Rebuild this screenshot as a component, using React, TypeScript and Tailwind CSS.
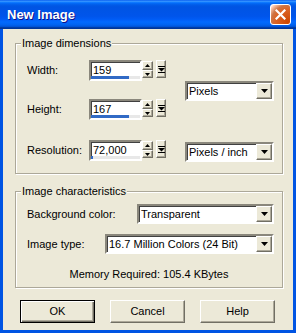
import React from "react";

const raised =
  "bg-[#ECE9D8] border border-t-white border-l-white border-r-[#716F64] border-b-[#716F64] shadow-[inset_-1px_-1px_0_#ACA899]";
const sunken =
  "bg-white border-2 border-t-[#8A877C] border-l-[#8A877C] border-r-white border-b-white shadow-[inset_1px_1px_0_#404040]";

function Arrow({ up }: { up?: boolean }) {
  return (
    <svg width="5" height="3" viewBox="0 0 5 3">
      {up ? <polygon points="2.5,0 5,3 0,3" fill="#000" /> : <polygon points="0,0 5,0 2.5,3" fill="#000" />}
    </svg>
  );
}

function SpinField({ value, bar }: { value: string; bar: number }) {
  return (
    <div className="flex items-start">
      <div className={`w-[53px] h-[21px] flex flex-col ${sunken}`}>
        <div className="h-[14px] leading-[15px] pl-[2px] pt-[1px]">{value}</div>
        <div className="mt-auto h-[3px] bg-[#E8E8E8] flex">
          <div className="h-full bg-[#316AC5]" style={{ width: bar }} />
        </div>
      </div>
      <div className="flex flex-col mt-[1px]">
        <div className={`w-[11px] h-[9px] flex items-center justify-center ${raised}`}>
          <Arrow up />
        </div>
        <div className={`w-[11px] h-[8px] flex items-center justify-center ${raised}`}>
          <Arrow />
        </div>
      </div>
      <div className={`ml-[3px] w-[10px] h-[18px] flex items-center justify-center ${raised}`}>
        <svg width="7" height="7" viewBox="0 0 7 7">
          <rect x="0" y="0" width="7" height="1" fill="#000" />
          <polygon points="0,2 7,2 3.5,5.5" fill="#000" />
          <rect x="0" y="6" width="7" height="1" fill="#000" />
        </svg>
      </div>
    </div>
  );
}

function Select({ value, width }: { value: string; width: string }) {
  return (
    <div className={`${width} h-[20px] flex items-center ${sunken}`}>
      <span className="flex-1 pl-[2px] leading-[14px]">{value}</span>
      <div className={`w-[16px] h-[16px] flex items-center justify-center ${raised}`}>
        <svg width="7" height="4" viewBox="0 0 7 4">
          <polygon points="0,0 7,0 3.5,4" fill="#000" />
        </svg>
      </div>
    </div>
  );
}

function Row({ label, value, bar }: { label: string; value: string; bar: number }) {
  return (
    <div className="flex items-center">
      <span className="w-[62px]">{label}</span>
      <SpinField value={value} bar={bar} />
    </div>
  );
}

function Button({ label, isDefault }: { label: string; isDefault?: boolean }) {
  return (
    <button
      className={`w-[75px] h-[23px] flex items-center justify-center ${
        isDefault
          ? "bg-[#ECE9D8] border border-black shadow-[inset_1px_1px_0_#fff,inset_-1px_-1px_0_#716F64,inset_-2px_-2px_0_#ACA899]"
          : raised
      }`}
    >
      {label}
    </button>
  );
}

export default function App() {
  return (
    <div className="w-[296px] h-[333px] flex flex-col bg-[#0054E3] font-['Liberation_Sans',Arial,sans-serif] text-[11px] text-black">
      <div className="h-[29px] flex items-center justify-between pl-[7px] pr-[5px] bg-[linear-gradient(180deg,#0058EE_0%,#3A93FF_4%,#288EFF_6%,#127DFF_8%,#036FFC_10%,#0262EE_14%,#0057E5_20%,#0054E3_24%,#0055EB_56%,#005BF5_66%,#026AFE_76%,#0062EF_86%,#0052D6_92%,#0040AB_94%,#003092_100%)]">
        <span className="text-white font-bold text-[13px] [text-shadow:1px_1px_#0F1089]">New Image</span>
        <div className="w-[21px] h-[21px] rounded-[3px] border border-white flex items-center justify-center bg-[radial-gradient(circle_at_90%_90%,#cc4600_0%,#dc6527_55%,#cd7546_70%,#ffccb2_90%,#fff_100%)]">
          <svg width="11" height="11" viewBox="0 0 11 11">
            <path d="M1.5 1.5 L9.5 9.5 M9.5 1.5 L1.5 9.5" stroke="#fff" strokeWidth="2.2" strokeLinecap="square" />
          </svg>
        </div>
      </div>

      <div className="flex-1 mx-[3px] mb-[3px] bg-[#ECE9D8] flex flex-col">
        <fieldset className="mt-[7px] ml-[12px] mr-[10px] border border-[#ACA899] shadow-[inset_1px_1px_0_#fff,1px_1px_0_#fff]">
          <legend className="ml-[5px] px-[1px] leading-[14px] bg-[#ECE9D8]">Image dimensions</legend>
          <div className="pl-[11px] pt-[10px] pb-[11px] flex flex-col">
            <div className="flex items-center">
              <div className="flex flex-col gap-[18px]">
                <Row label="Width:" value="159" bar={38} />
                <Row label="Height:" value="167" bar={38} />
              </div>
              <div className="ml-[19px] mt-[2px]">
                <Select value="Pixels" width="w-[89px]" />
              </div>
            </div>
            <div className="flex items-center mt-[19px]">
              <Row label="Resolution:" value="72,000" bar={2} />
              <div className="ml-[19px] mt-[3px]">
                <Select value="Pixels / inch" width="w-[89px]" />
              </div>
            </div>
          </div>
        </fieldset>

        <fieldset className="mt-[10px] ml-[12px] mr-[10px] border border-[#ACA899] shadow-[inset_1px_1px_0_#fff,1px_1px_0_#fff]">
          <legend className="ml-[5px] px-[1px] leading-[14px] bg-[#ECE9D8]">Image characteristics</legend>
          <div className="pl-[11px] pt-[6px] pb-[6px] flex flex-col">
            <div className="flex items-center">
              <span className="w-[110px]">Background color:</span>
              <Select value="Transparent" width="w-[137px]" />
            </div>
            <div className="flex items-center mt-[10px]">
              <span className="w-[78px]">Image type:</span>
              <Select value="16.7 Million Colors (24 Bit)" width="w-[169px]" />
            </div>
            <div className="mt-[14px] leading-[13px] text-center pr-[11px]">Memory Required: 105.4 KBytes</div>
          </div>
        </fieldset>

        <div className="flex gap-[15px] pl-[17px] mt-[12px]">
          <Button label="OK" isDefault />
          <Button label="Cancel" />
          <Button label="Help" />
        </div>
      </div>
    </div>
  );
}
